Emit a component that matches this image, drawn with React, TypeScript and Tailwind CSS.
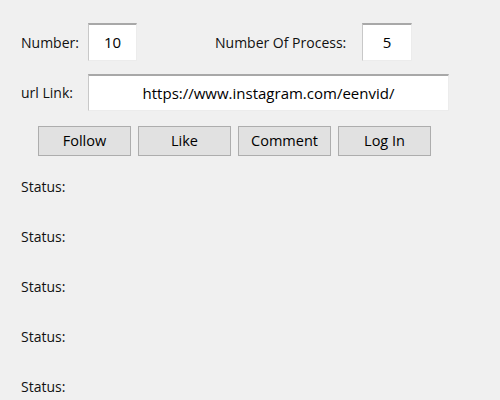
import React from 'react'

const font = { fontFamily: '"Open Sans", "Noto Sans", Arial, sans-serif' }

const Entry = ({ value, className }: { value: string; className: string }) => (
  <div className={`flex items-center justify-center bg-white border-t-2 border-l border-t-[#a8a8a8] border-l-[#c8c8c8] border-r border-b border-r-[#ececec] border-b-[#ececec] text-[15px] text-black ${className}`}>
    {value}
  </div>
)

const App = () => {
  const buttons = ['Follow', 'Like', 'Comment', 'Log In']
  return (
    <div className="w-[500px] h-[400px] bg-[#f0f0f0] text-[14px] text-[#111] overflow-hidden" style={font}>
      <div className="flex items-center pt-[23px] h-[61px]">
        <span className="ml-[21px] w-[67px]">Number:</span>
        <Entry value="10" className="w-[49px] h-[38px]" />
        <span className="ml-[78px] w-[147px]">Number Of Process:</span>
        <Entry value="5" className="w-[50px] h-[38px]" />
      </div>
      <div className="flex items-center mt-[13px] h-[37px]">
        <span className="ml-[21px] w-[67px]">url Link:</span>
        <Entry value="https://www.instagram.com/eenvid/" className="w-[361px] h-[37px]" />
      </div>
      <div className="flex gap-[7px] ml-[38px] mt-[15px]">
        {buttons.map((b) => (
          <button key={b} className="w-[93px] h-[30px] bg-[#e1e1e1] border border-[#adadad] text-[14.5px] text-black">
            {b}
          </button>
        ))}
      </div>
      <div className="flex flex-col ml-[21px] mt-[21px] gap-[30px]">
        {[1, 2, 3, 4, 5].map((i) => (
          <span key={i} className="h-[20px] leading-[20px]">Status:</span>
        ))}
      </div>
    </div>
  )
}

export default App
